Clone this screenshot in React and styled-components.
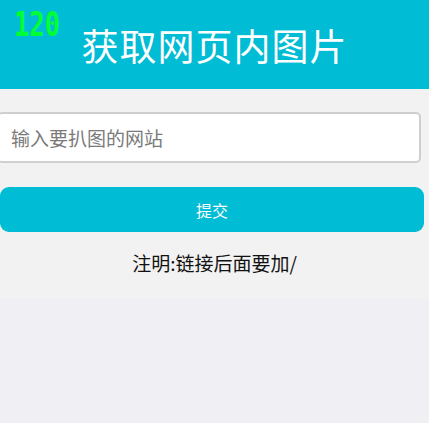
import styled, { createGlobalStyle } from 'styled-components'

const GlobalStyle = createGlobalStyle`
  html, body {
    margin: 0;
    padding: 0;
    background: #efeff4;
    font-family: "Noto Sans CJK SC", "Noto Sans", sans-serif;
    overflow: hidden;
  }
`

export default function App() {
  return (
    <>
      <GlobalStyle />
      <Page>
        <Fps>120</Fps>
        <Header>获取网页内图片</Header>
        <Content>
          <UrlInput type="text" placeholder="输入要扒图的网站" />
          <Submit>提交</Submit>
          <Note>注明:链接后面要加/</Note>
        </Content>
      </Page>
    </>
  )
}

const Page = styled.div`
  position: relative;
  width: 429px;
  min-height: 423px;
  background: #efeff4;
`

// fps counter overlay in the top-left corner
const Fps = styled.div`
  position: absolute;
  top: 7px;
  left: 14px;
  font-family: "DejaVu Sans Mono", monospace;
  font-weight: bold;
  font-size: 34px;
  line-height: 34px;
  color: #00ff33;
  transform: scaleX(0.75);
  transform-origin: left center;
`

const Header = styled.header`
  height: 89px;
  background: #00bcd4;
  color: #fff;
  display: flex;
  align-items: center;
  justify-content: center;
  font-size: 37px;
  letter-spacing: 1px;
`

const Content = styled.main`
  background: #f2f2f2;
  height: 209px;
  padding-top: 23px;
  box-sizing: border-box;
  display: flex;
  flex-direction: column;
`

const UrlInput = styled.input`
  box-sizing: border-box;
  width: calc(100% - 5px);
  margin-left: -3px;
  height: 51px;
  border: 2px solid #cfcfcf;
  border-radius: 5px;
  background: #fff;
  padding: 0 12px;
  font-family: inherit;
  font-size: 19px;
  outline: none;
  &::placeholder {
    color: #7a7a7a;
  }
`

const Submit = styled.button`
  margin-top: 24px;
  width: 424px;
  height: 45px;
  border: none;
  border-radius: 9px;
  background: #00bcd4;
  color: #fff;
  font-family: inherit;
  font-size: 16px;
  padding: 0;
`

const Note = styled.p`
  margin: 18px 0 0;
  text-align: center;
  font-size: 19px;
  line-height: 26px;
  color: #111;
`
